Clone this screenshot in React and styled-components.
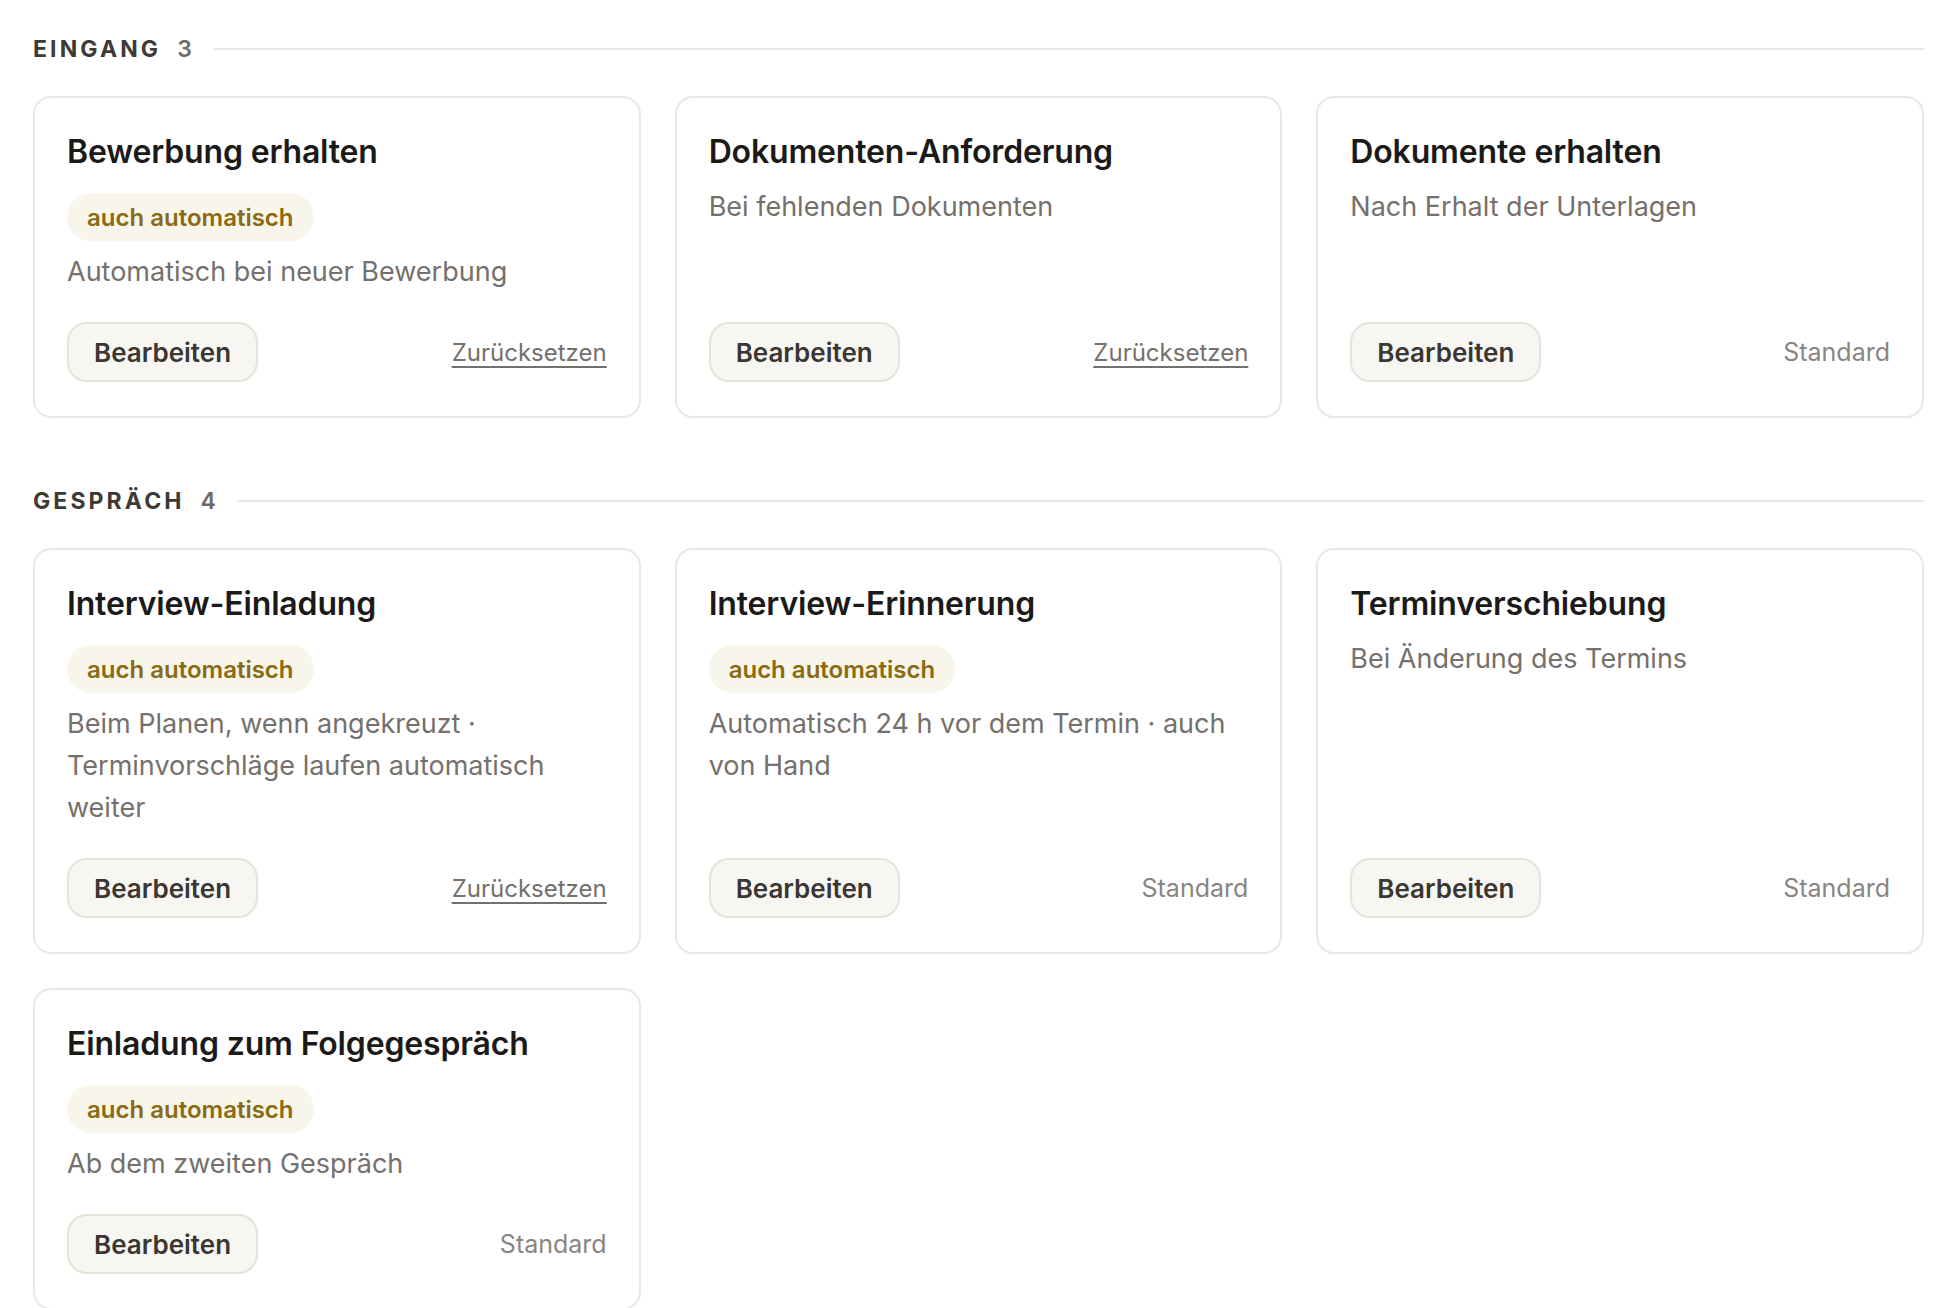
import React from 'react';
import styled, { createGlobalStyle } from 'styled-components';

const GlobalStyle = createGlobalStyle`
  html, body {
    margin: 0;
    padding: 0;
    background: #ffffff;
  }
  body {
    font-family: "Inter", "Noto Sans", sans-serif;
    -webkit-font-smoothing: antialiased;
  }
`;

const Page = styled.div`
  padding: 34px 32px 40px 33px;
  display: flex;
  flex-direction: column;
  gap: 68px;
`;

const Section = styled.section`
  display: flex;
  flex-direction: column;
  gap: 32px;
`;

const SectionHead = styled.div`
  display: flex;
  align-items: center;
  height: 30px;
`;

const SectionTitle = styled.h2`
  margin: 0;
  font-size: 23px;
  font-weight: 700;
  letter-spacing: 0.135em;
  text-transform: uppercase;
  color: #3d3935;
`;

const SectionCount = styled.span`
  margin-left: 16px;
  font-size: 23px;
  font-weight: 600;
  color: #6f6a65;
`;

const Rule = styled.div`
  flex: 1;
  height: 2px;
  margin-left: 21px;
  background: #ebe7e2;
`;

const Grid = styled.div`
  display: grid;
  grid-template-columns: repeat(3, 1fr);
  gap: 34px;
`;

const Card = styled.article`
  display: flex;
  flex-direction: column;
  padding: 34px 32px;
  border: 2px solid #ebe7e1;
  border-radius: 18px;
  background: #fff;
  min-width: 0;
`;

const Title = styled.h3`
  margin: 0 0 14px;
  font-size: 32px;
  line-height: 40px;
  font-weight: 600;
  letter-spacing: -0.005em;
  color: #1c1a18;
`;

const Badge = styled.span`
  align-self: flex-start;
  margin: 7px 0 10px;
  padding: 0 20px;
  height: 48px;
  display: inline-flex;
  align-items: center;
  border-radius: 24px;
  background: #f8f5ea;
  color: #8a6a12;
  font-size: 24px;
  font-weight: 600;
`;

const Desc = styled.p`
  margin: 0;
  font-size: 27px;
  line-height: 42px;
  color: #75706b;
`;

const Actions = styled.div`
  margin-top: auto;
  padding-top: 29px;
  display: flex;
  align-items: center;
  justify-content: space-between;
`;

const EditButton = styled.button`
  height: 60px;
  padding: 0 25px;
  border: 2px solid #e6e2da;
  border-radius: 20px;
  background: #f7f6f2;
  font-family: inherit;
  font-size: 26px;
  font-weight: 600;
  color: #3a3632;
  cursor: pointer;
`;

const ResetLink = styled.a`
  font-size: 24px;
  color: #75706b;
  text-decoration: underline;
  text-decoration-thickness: 2px;
  text-underline-offset: 5px;
  cursor: pointer;
`;

const DefaultLabel = styled.span`
  font-size: 25px;
  color: #8a8580;
`;

const sections = [
  {
    name: 'Eingang',
    items: [
      { title: 'Bewerbung erhalten', auto: true, desc: 'Automatisch bei neuer Bewerbung', changed: true },
      { title: 'Dokumenten-Anforderung', desc: 'Bei fehlenden Dokumenten', changed: true },
      { title: 'Dokumente erhalten', desc: 'Nach Erhalt der Unterlagen' },
    ],
  },
  {
    name: 'Gespräch',
    items: [
      {
        title: 'Interview-Einladung',
        auto: true,
        desc: 'Beim Planen, wenn angekreuzt · Terminvorschläge laufen automatisch weiter',
        changed: true,
      },
      { title: 'Interview-Erinnerung', auto: true, desc: 'Automatisch 24 h vor dem Termin · auch von Hand' },
      { title: 'Terminverschiebung', desc: 'Bei Änderung des Termins' },
      { title: 'Einladung zum Folgegespräch', auto: true, desc: 'Ab dem zweiten Gespräch' },
    ],
  },
];

function TemplateCard({ item }) {
  return (
    <Card>
      <Title>{item.title}</Title>
      {item.auto && <Badge>auch automatisch</Badge>}
      <Desc>{item.desc}</Desc>
      <Actions>
        <EditButton>Bearbeiten</EditButton>
        {item.changed ? <ResetLink>Zurücksetzen</ResetLink> : <DefaultLabel>Standard</DefaultLabel>}
      </Actions>
    </Card>
  );
}

export default function App() {
  return (
    <>
      <GlobalStyle />
      <Page>
        {sections.map((s) => (
          <Section key={s.name}>
            <SectionHead>
              <SectionTitle>{s.name}</SectionTitle>
              <SectionCount>{s.items.length}</SectionCount>
              <Rule />
            </SectionHead>
            <Grid>
              {s.items.map((item) => (
                <TemplateCard key={item.title} item={item} />
              ))}
            </Grid>
          </Section>
        ))}
      </Page>
    </>
  );
}
